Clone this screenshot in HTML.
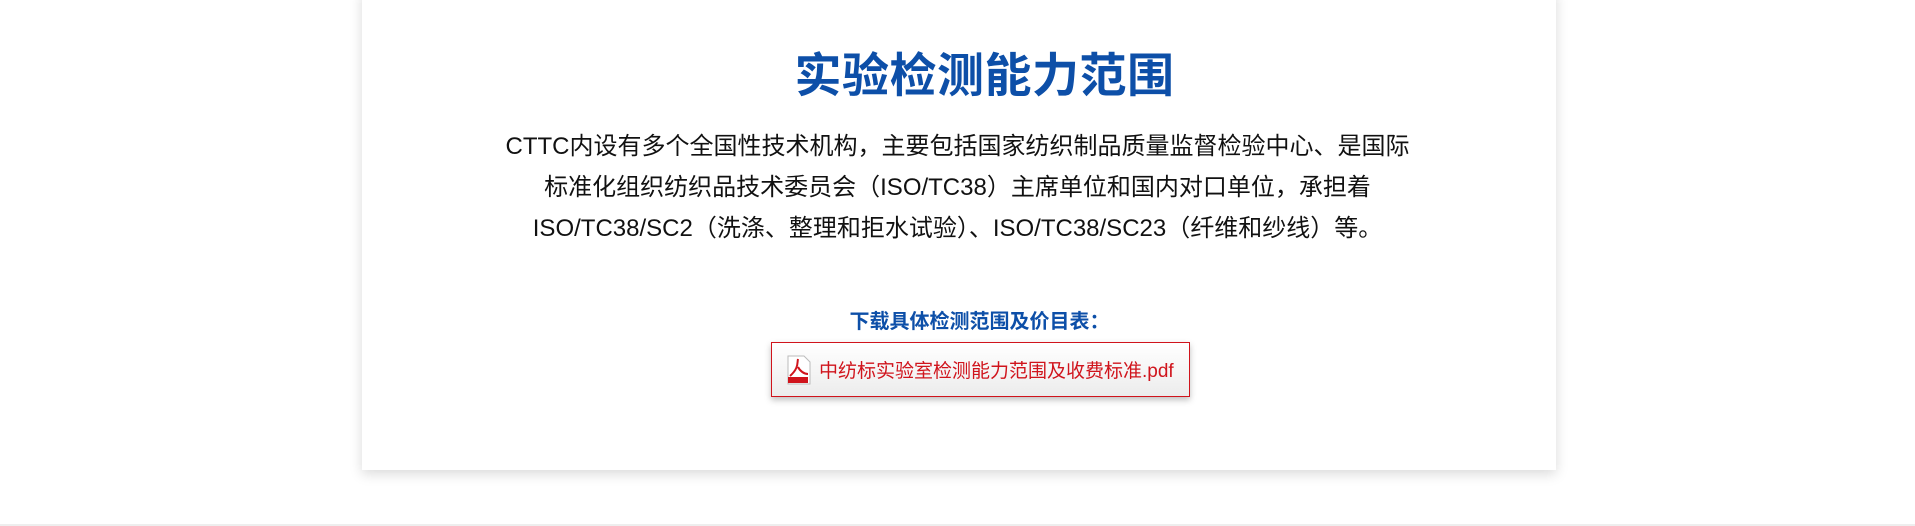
<!DOCTYPE html>
<html><head><meta charset="utf-8"><style>
html,body{margin:0;padding:0;}
body{width:1915px;height:526px;background:#fff;position:relative;overflow:hidden;font-family:"Liberation Sans","Noto Sans CJK SC",sans-serif;}
.card{position:absolute;left:362px;top:-10px;width:1194px;height:480px;background:#fff;box-shadow:0 4px 12px rgba(0,0,0,0.15);}
.foot{position:absolute;left:0;top:524px;width:1915px;height:2px;background:#eee;}
h1{position:absolute;left:27px;width:100%;top:41px;margin:0;text-align:center;font-size:47px;font-weight:bold;color:#0d4fa8;line-height:70px;letter-spacing:0.5px;}
.p{position:absolute;left:0;width:100%;top:126px;text-align:center;font-size:24px;line-height:41px;color:#111;}
.dl{position:absolute;left:22px;width:100%;top:305px;text-align:center;font-size:20px;font-weight:bold;color:#0d4fa8;}
.btn{position:absolute;left:771px;top:342px;width:417px;height:53px;border:1px solid #d0141c;background:linear-gradient(#fff,#ececec);box-shadow:0 3px 6px rgba(0,0,0,0.25);}
.btn span{position:absolute;left:47px;top:13px;font-size:19px;color:#d0141c;white-space:nowrap;}
.btn svg{position:absolute;left:14px;top:12px;}
</style></head><body>
<div class="card"></div>
<h1>实验检测能力范围</h1>
<div class="p">CTTC内设有多个全国性技术机构，主要包括国家纺织制品质量监督检验中心、是国际<br>标准化组织纺织品技术委员会（ISO/TC38）主席单位和国内对口单位，承担着<br>ISO/TC38/SC2（洗涤、整理和拒水试验）、ISO/TC38/SC23（纤维和纱线）等。</div>
<div class="dl">下载具体检测范围及价目表：</div>
<div class="btn"><svg width="26" height="30" viewBox="0 0 26 30"><path d="M2 1h16l6 6v22H2z" fill="#fff" stroke="#bbb"/><path d="M12 4c-1 4 1 9-8 17M12 12c2 4 6 7 10 7" stroke="#d0141c" stroke-width="2" fill="none"/><rect x="2" y="22" width="20" height="6" fill="#d0141c"/></svg><span>中纺标实验室检测能力范围及收费标准.pdf</span></div>
<div class="foot"></div>
</body></html>
